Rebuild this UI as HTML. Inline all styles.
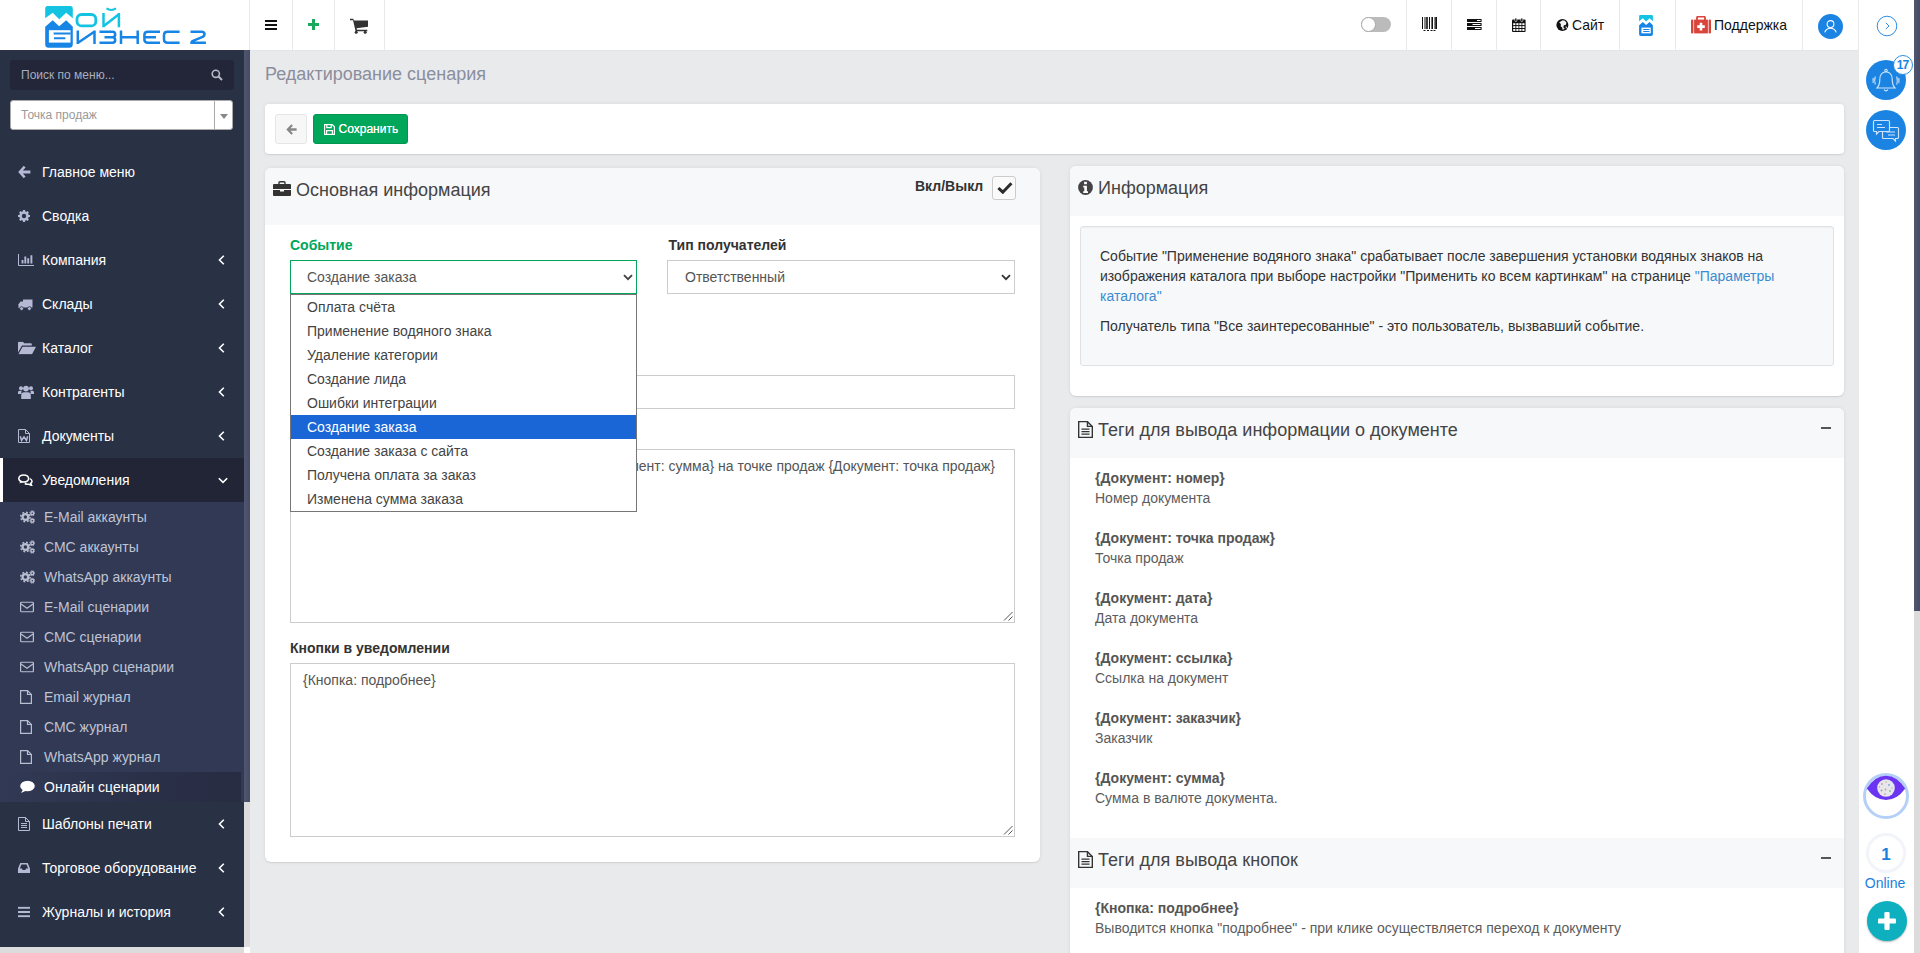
<!DOCTYPE html>
<html lang="ru"><head><meta charset="utf-8">
<style>
*{box-sizing:border-box;margin:0;padding:0}
html,body{width:1920px;height:953px;overflow:hidden;background:#e9eaec;font-family:"Liberation Sans",sans-serif;font-size:14px;color:#333}
.abs{position:absolute}
#hdr{position:absolute;left:0;top:0;width:1859px;height:51px;background:#fff;border-bottom:1px solid #e3e4e6}
.vd{position:absolute;top:0;width:1px;height:50px;background:#e9e9e9}
#side{position:absolute;left:0;top:50px;width:244px;height:897px;background:#293145;overflow:hidden}
#sidescroll{position:absolute;left:244px;top:50px;width:6px;height:897px;background:#dcdcdc}
#sidescroll i{position:absolute;left:0;top:0;width:6px;height:752px;background:linear-gradient(90deg,#51566f,#464c67)}
#sidebot{position:absolute;left:0;top:947px;width:244px;height:6px;background:#dcdcdc}
.mi{position:absolute;left:0;width:244px;height:44px;color:#fff;font-size:14px;line-height:44px;padding-left:42px}
.mi svg.ic{position:absolute;left:18px;top:50%;transform:translateY(-50%)}
.mi .ch{position:absolute;left:218px;top:17px}
.si{position:absolute;left:0;width:244px;height:30px;color:#bfc4d4;font-size:14px;line-height:30px;padding-left:44px}
.si svg{position:absolute;left:20px;top:50%;transform:translateY(-50%)}
#rp{position:absolute;left:1859px;top:0;width:55px;height:953px;background:#fff}
#pscroll{position:absolute;left:1914px;top:0;width:6px;height:953px;background:#dcdcdc}
#pscroll i{position:absolute;left:0;top:0;width:6px;height:611px;background:linear-gradient(90deg,#51566f,#464c67)}
.card{position:absolute;background:#fff;border-radius:6px;box-shadow:0 0 4px rgba(0,0,0,.07),0 1px 1px rgba(0,0,0,.08);overflow:hidden}
.ch1{position:absolute;left:0;top:0;width:100%;background:#f7f8fa}
.h3{position:absolute;font-size:18px;color:#444;white-space:nowrap}
.lbl{position:absolute;font-weight:bold;font-size:14px;color:#333;white-space:nowrap}
.fc{position:absolute;background:#fff;border:1px solid #ccc;font-size:14px;color:#555}
.tg{position:absolute;left:25px;white-space:nowrap;font-size:14px;line-height:20px;color:#5c5c5c}
.tg b{color:#555}
.op{position:absolute;left:0;width:345px;height:24px;line-height:24px;padding-left:16px;white-space:nowrap}
</style></head><body>
<!-- HEADER -->
<div id="hdr">
<svg class="abs" style="left:0;top:0" width="250" height="50" viewBox="0 0 250 50">
<path d="M45.2 8.6a2.5 2.5 0 0 1 2.5-2.5h22.6a2.5 2.5 0 0 1 2.5 2.5V18.3L66.2 12.7 59.2 19.2 52.7 12.7 45.2 18.3z" fill="#14c3e2"/>
<path d="M45.2 26.7L52.7 20.2 59.2 26.2 66.2 20.2 72.8 26.7V44.3a3.5 3.5 0 0 1-3.5 3.5H48.7a3.5 3.5 0 0 1-3.5-3.5z" fill="#1785e6"/>
<rect x="48.9" y="30.2" width="21.6" height="12.4" fill="#fff"/>
<path d="M53.6 33.4H70.5M54 38.3H65.3" stroke="#1785e6" stroke-width="2" fill="none"/>
<g fill="none" stroke="#14c3e2" stroke-width="2.5">
<rect x="77" y="14.5" width="18.8" height="11.4" rx="4.5" stroke-width="2.8"/>
<path d="M103.5 13.1V27.2M118.9 13.1V27.2M103.8 26L118.6 14.4" />
<path d="M106.5 8.4Q111.2 11.6 116 8.4" stroke-width="2"/>
</g>
<g fill="none" stroke="#1785e6" stroke-width="2.5">
<path d="M77.8 30.5V44M94.5 30.5V44M78 42.8L94.3 31.7"/>
<path d="M99.5 31.8H112.5Q115.2 31.8 115.2 34.5Q115.2 37.2 112.5 37.2H104.5M112.5 37.2Q115.2 37.2 115.2 40Q115.2 42.7 112.5 42.7H99.5"/>
<path d="M121 30.5V44M137.7 30.5V44M121 37.2H137.7"/>
<path d="M160 31.8H148Q144.4 31.8 144.4 35V39.5Q144.4 42.7 148 42.7H160M144.4 37.2H156"/>
<path d="M179.6 31.8H167.6Q164 31.8 164 35V39.5Q164 42.7 167.6 42.7H179.6"/>
<path d="M190.5 31.8H201.5Q204.5 31.8 204.5 34.2Q204.5 36.2 202 37.2L192.5 41.2Q191.5 41.7 191.5 42.7H205.9"/>
</g>
</svg>
<i class="vd" style="left:249px"></i><i class="vd" style="left:292px"></i><i class="vd" style="left:334px"></i><i class="vd" style="left:384px"></i>
<!-- hamburger -->
<svg class="abs" style="left:265px;top:20px" width="12" height="10"><path d="M0 1h12M0 5h12M0 9h12" stroke="#111" stroke-width="2"/></svg>
<!-- plus -->
<svg class="abs" style="left:308px;top:19px" width="11" height="11"><path d="M5.5 0v11M0 5.5h11" stroke="#1aa85c" stroke-width="3"/></svg>
<!-- cart -->
<svg class="abs" style="left:350px;top:18px" width="18" height="16" viewBox="0 0 18 16"><path d="M0 0.8h3.2l0.8 1.6h14v6.4l-11.4 1.4 0.4 1.6h10.3v1.4H5.6L3 2.2H0z" fill="#333"/><circle cx="6.2" cy="14.2" r="1.5" fill="#333"/><circle cx="15.2" cy="14.2" r="1.5" fill="#333"/></svg>
<!-- toggle -->
<div class="abs" style="left:1361px;top:17px;width:30px;height:15px;border-radius:8px;background:#bbb"></div>
<div class="abs" style="left:1361px;top:17px;width:15px;height:15px;border-radius:8px;background:#fff;border:1px solid #aaa"></div>
<i class="vd" style="left:1406px"></i><i class="vd" style="left:1451px"></i><i class="vd" style="left:1496px"></i><i class="vd" style="left:1540px"></i><i class="vd" style="left:1619px"></i><i class="vd" style="left:1675px"></i><i class="vd" style="left:1802px"></i><i class="vd" style="left:1858px"></i>
<!-- barcode -->
<svg class="abs" style="left:1422px;top:17px" width="15" height="15"><path d="M0.5 0v12M3 0v12M7.5 0v12M13 0v12" stroke="#111" stroke-width="1"/><path d="M5 0v12M10.2 0v12M14.2 0v12" stroke="#111" stroke-width="1.6"/><path d="M1.5 13.5h2M5 13.5h2M8.5 13.5h2M11.5 13.5h2" stroke="#111" stroke-width="1"/></svg>
<!-- tasks -->
<svg class="abs" style="left:1467px;top:19px" width="15" height="11"><path d="M0 1.5h14.6M0 5.5h14.6M0 9.5h14.6" stroke="#111" stroke-width="3"/><path d="M10 1.5h3.6M5.5 5.5h8M8 9.5h5.6" stroke="#fff" stroke-width="1"/></svg>
<!-- calendar -->
<svg class="abs" style="left:1512px;top:18px" width="14" height="14" viewBox="0 0 14 14"><rect x="0" y="1.6" width="13.6" height="12.4" rx="1" fill="#111"/><g fill="#fff"><rect x="1.2" y="5.2" width="2.2" height="1.9"/><rect x="4.3" y="5.2" width="2.2" height="1.9"/><rect x="7.3" y="5.2" width="2.2" height="1.9"/><rect x="10.3" y="5.2" width="2.2" height="1.9"/><rect x="1.2" y="8.1" width="2.2" height="1.9"/><rect x="4.3" y="8.1" width="2.2" height="1.9"/><rect x="7.3" y="8.1" width="2.2" height="1.9"/><rect x="10.3" y="8.1" width="2.2" height="1.9"/><rect x="1.2" y="11" width="2.2" height="1.9"/><rect x="4.3" y="11" width="2.2" height="1.9"/><rect x="7.3" y="11" width="2.2" height="1.9"/><rect x="10.3" y="11" width="2.2" height="1.9"/></g><rect x="2.8" y="0" width="2" height="3.6" rx="1" fill="#111" stroke="#fff" stroke-width=".6"/><rect x="8.8" y="0" width="2" height="3.6" rx="1" fill="#111" stroke="#fff" stroke-width=".6"/></svg>
<!-- globe + Сайт -->
<svg class="abs" style="left:1556px;top:19px" width="13" height="12" viewBox="0 0 13 12"><circle cx="6.4" cy="6" r="6" fill="#111"/><path d="M6.5 1.2l2.4.5 1.6 2-.8 2.2-1.8.4-.6 2 1.4 1.2-2 1.6-.4-2.4-1.6-1.4.2-2.2L3.200 3.400z" fill="#fff" opacity=".95"/><path d="M9.6 7.200l1.400.8-1 2z" fill="#fff"/></svg>
<div class="abs" style="left:1572px;top:17px;font-size:14px;line-height:16px;color:#111;transform-origin:0 50%;transform:scale(1,1.08)">Сайт</div>
<!-- small logo -->
<svg class="abs" style="left:1639px;top:15px" width="14" height="21" viewBox="45 6 28 42" preserveAspectRatio="none">
<path d="M45.2 8.600a2.500 2.500 0 0 1 2.500-2.500h22.600a2.500 2.500 0 0 1 2.500 2.500V18.300L66.200 12.700 59.200 19.200 52.700 12.700 45.200 18.300z" fill="#14c3e2"/>
<path d="M45.2 26.700L52.700 20.200 59.200 26.200 66.200 20.200 72.800 26.700V44.300a3.500 3.500 0 0 1-3.500 3.500H48.700a3.500 3.500 0 0 1-3.500-3.500z" fill="#1785e6"/>
<rect x="49.900" y="31.200" width="18.600" height="11.400" fill="#fff"/><path d="M53.500 35H66M53.500 39H66" stroke="#1785e6" stroke-width="2"/></svg>
<!-- medkit -->
<svg class="abs" style="left:1691px;top:16px" width="20" height="18" viewBox="0 0 20 18"><path d="M6 4V1.800Q6 .6 7.200 .6h5.600Q14 .6 14 1.800V4" fill="none" stroke="#d9453b" stroke-width="1.800"/><rect x="0" y="3.600" width="2.400" height="13.800" rx="1" fill="#d9453b"/><rect x="17.600" y="3.600" width="2.400" height="13.800" rx="1" fill="#d9453b"/><rect x="3.100" y="3.600" width="13.800" height="13.800" fill="#d9453b"/><path d="M10 6.800v7.600M6.200 10.600h7.600" stroke="#fff" stroke-width="2.600"/></svg>
<div class="abs" style="left:1714px;top:17px;font-size:14px;line-height:16px;color:#111;transform-origin:0 50%;transform:scale(1,1.08)">Поддержка</div>
<!-- user avatar -->
<div class="abs" style="left:1818px;top:14px;width:25px;height:25px;border-radius:13px;background:#1b84e3"></div>
<svg class="abs" style="left:1818px;top:14px" width="25" height="25" viewBox="0 0 25 25" fill="none" stroke="#fff" stroke-width="1.050"><circle cx="12.500" cy="10" r="3.400"/><path d="M6.800 18.400Q8 14.200 12.500 14.200T18.200 18.400"/></svg>
</div>
<!-- SIDEBAR -->
<div id="side">
<div class="abs" style="left:10px;top:10px;width:224px;height:30px;background:#222638;border-radius:3px;color:#a9adbd;font-size:12px;line-height:30px;padding-left:11px">Поиск по меню...</div>
<svg class="abs" style="left:211px;top:19px" width="12" height="12" viewBox="0 0 12 12"><circle cx="4.800" cy="4.800" r="3.600" fill="none" stroke="#b5b9c8" stroke-width="1.600"/><path d="M7.500 7.500L11 11" stroke="#b5b9c8" stroke-width="2"/></svg>
<div class="abs" style="left:10px;top:50px;width:223px;height:30px;background:#fff;border-radius:3px;border:1px solid #aaa;color:#999;font-size:12px;line-height:28px;padding-left:10px">Точка продаж</div>
<div class="abs" style="left:214px;top:51px;width:1px;height:28px;background:#aaa"></div><div class="abs" style="left:220px;top:64px;border:4px solid transparent;border-top:5px solid #888;border-bottom:0"></div>
<div class="abs" style="left:0;top:408px;width:244px;height:44px;background:#212536;border-left:3px solid #fff"></div>
<div class="abs" style="left:0;top:452px;width:244px;height:300px;background:#313954"></div>
<div class="abs" style="left:5px;top:722px;width:236px;height:30px;background:linear-gradient(90deg,#313954,#2a3048 60%,#272c42)"></div>
<div class="mi" style="top:100px;"><svg class="ic" width="13" height="13" viewBox="0 0 13 13"><path d="M.2 6.500L5.700 .2 7.600 2 4.900 5H12.400V8H4.900L7.600 11 5.700 12.800z" fill="#b5b9d4"/></svg>Главное меню</div>
<div class="mi" style="top:144px;"><svg class="ic" width="12" height="12" viewBox="0 0 12 12"><circle cx="6" cy="6" r="3.500" fill="none" stroke="#b5b9d4" stroke-width="2.600"/><g stroke="#b5b9d4" stroke-width="2.200"><path d="M6 0v2.200M6 9.800V12M0 6h2.200M9.800 6H12M1.800 1.800l1.500 1.500M8.700 8.700l1.500 1.500M1.800 10.200l1.500-1.500M8.700 3.300l1.500-1.500"/></g></svg>Сводка</div>
<div class="mi" style="top:188px;"><svg class="ic" width="16" height="12" viewBox="0 0 16 12"><path d="M0.500 0V11.500H16" fill="none" stroke="#b5b9d4" stroke-width="1"/><path d="M4.500 9.600V6M7.300 9.600V2.500M10.200 9.600V4.200M13.400 9.600V1.200" stroke="#b5b9d4" stroke-width="1.900"/></svg>Компания<svg class="ch" width="7" height="10" viewBox="0 0 7 10"><path d="M5.800 .8L1.500 5l4.300 4.200" fill="none" stroke="#fff" stroke-width="1.600"/></svg></div>
<div class="mi" style="top:232px;"><svg class="ic" style="margin-top:1px" width="15" height="12" viewBox="0 0 15 12"><path d="M5 .5h9.500v8H5z" fill="#b5b9d4"/><path d="M0.500 9V5.200L2.500 2.500H5V9z" fill="#b5b9d4"/><circle cx="3.600" cy="9.600" r="1.900" fill="#b5b9d4" stroke="#293145" stroke-width=".8"/><circle cx="11.400" cy="9.600" r="1.900" fill="#b5b9d4" stroke="#293145" stroke-width=".8"/></svg>Склады<svg class="ch" width="7" height="10" viewBox="0 0 7 10"><path d="M5.800 .8L1.500 5l4.300 4.200" fill="none" stroke="#fff" stroke-width="1.600"/></svg></div>
<div class="mi" style="top:276px;"><svg class="ic" width="18" height="13" viewBox="0 0 18 13"><path d="M0 11V1.200Q0 .3 1 .3h4l1.200 1.500h6.600q1 0 1 1V4H4L0 11z" fill="#b5b9d4"/><path d="M4.600 5.200H18L14 12.700H0.400z" fill="#b5b9d4"/></svg>Каталог<svg class="ch" width="7" height="10" viewBox="0 0 7 10"><path d="M5.800 .8L1.500 5l4.300 4.200" fill="none" stroke="#fff" stroke-width="1.600"/></svg></div>
<div class="mi" style="top:320px;"><svg class="ic" width="16" height="14" viewBox="0 0 16 14"><circle cx="3" cy="3.300" r="2" fill="#b5b9d4"/><circle cx="13" cy="3.300" r="2" fill="#b5b9d4"/><path d="M0 9V7.200q0-1.500 1.500-1.500h2.200Q3 7 3.500 9z" fill="#b5b9d4"/><path d="M16 9V7.200q0-1.500-1.500-1.500h-2.200Q13 7 12.500 9z" fill="#b5b9d4"/><circle cx="8" cy="3.600" r="2.900" fill="#b5b9d4"/><path d="M3.200 14V10q0-2.500 2.500-2.800h4.600Q12.800 7.500 12.800 10V14q-4.800 0-9.600 0z" fill="#b5b9d4"/></svg>Контрагенты<svg class="ch" width="7" height="10" viewBox="0 0 7 10"><path d="M5.800 .8L1.500 5l4.300 4.200" fill="none" stroke="#fff" stroke-width="1.600"/></svg></div>
<div class="mi" style="top:364px;"><svg class="ic" width="12" height="14" viewBox="0 0 12 14"><path d="M.5 .5H7.500L11.500 4.500V13.500H.5z" fill="none" stroke="#b5b9d4" stroke-width="1"/><path d="M7.500 .5V4.500H11.500" fill="none" stroke="#b5b9d4" stroke-width="1"/><path d="M2.300 7.200L3.600 11.400 6 7.800 8.400 11.400 9.700 7.200" fill="none" stroke="#b5b9d4" stroke-width="1.500"/></svg>Документы<svg class="ch" width="7" height="10" viewBox="0 0 7 10"><path d="M5.800 .8L1.500 5l4.300 4.200" fill="none" stroke="#fff" stroke-width="1.600"/></svg></div>
<div class="mi" style="top:408px;"><svg class="ic" width="15" height="12" viewBox="0 0 15 12"><ellipse cx="5.700" cy="4.500" rx="4.900" ry="3.500" fill="none" stroke="#fff" stroke-width="1.600"/><path d="M2.400 7.200L1.400 9.600l3.200-1.500z" fill="#fff"/><path d="M11.800 4.600Q14.200 5.600 14 7.500 13.700 8.800 12.600 9.400L13.600 11.400 10.800 10.200Q8.500 10.600 6.800 9.500" fill="none" stroke="#fff" stroke-width="1.500"/></svg>Уведомления<svg class="ch" style="top:19px" width="10" height="7" viewBox="0 0 10 7"><path d="M.8 1.200L5 5.400 9.200 1.200" fill="none" stroke="#fff" stroke-width="1.600"/></svg></div>
<div class="mi" style="top:752px;"><svg class="ic" width="12" height="14" viewBox="0 0 12 14"><path d="M.5 .5H7.500L11.500 4.500V13.500H.5z" fill="none" stroke="#b5b9d4" stroke-width="1"/><path d="M7.500 .5V4.500H11.500" fill="none" stroke="#b5b9d4" stroke-width="1"/><path d="M3 6.500h6M3 8.500h6M3 10.500h6" stroke="#b5b9d4" stroke-width="1"/></svg>Шаблоны печати<svg class="ch" width="7" height="10" viewBox="0 0 7 10"><path d="M5.800 .8L1.500 5l4.300 4.200" fill="none" stroke="#fff" stroke-width="1.600"/></svg></div>
<div class="mi" style="top:796px;"><svg class="ic" width="12" height="10" viewBox="0 0 13 10" preserveAspectRatio="none"><path d="M0 10V5.500L2.500 0H10.500L13 5.500V10z" fill="#b5b9d4"/><path d="M2 5.500L3.700 1.600H9.300L11 5.500H8.700L8 7H5L4.300 5.500z" fill="#293145"/></svg>Торговое оборудование<svg class="ch" width="7" height="10" viewBox="0 0 7 10"><path d="M5.800 .8L1.500 5l4.300 4.200" fill="none" stroke="#fff" stroke-width="1.600"/></svg></div>
<div class="mi" style="top:840px;"><svg class="ic" width="12" height="11" viewBox="0 0 13 11" preserveAspectRatio="none"><path d="M0 1.200h13M0 5.500h13M0 9.800h13" stroke="#b5b9d4" stroke-width="2"/></svg>Журналы и история<svg class="ch" width="7" height="10" viewBox="0 0 7 10"><path d="M5.800 .8L1.500 5l4.300 4.200" fill="none" stroke="#fff" stroke-width="1.600"/></svg></div>
<div class="si" style="top:452px"><svg width="15" height="14" viewBox="0 0 15 14"><circle cx="5.400" cy="7" r="2.900" fill="none" stroke="#b9bdd0" stroke-width="2.300"/><circle cx="5.400" cy="7" r="4.700" fill="none" stroke="#b9bdd0" stroke-width="1.500" stroke-dasharray="1.900 1.790"/><circle cx="12.300" cy="3.200" r="1.500" fill="none" stroke="#b9bdd0" stroke-width="1.400"/><circle cx="12.300" cy="3.200" r="2.500" fill="none" stroke="#b9bdd0" stroke-width="1" stroke-dasharray="1 .96"/><circle cx="12.300" cy="10.800" r="1.500" fill="none" stroke="#b9bdd0" stroke-width="1.400"/><circle cx="12.300" cy="10.800" r="2.500" fill="none" stroke="#b9bdd0" stroke-width="1" stroke-dasharray="1 .96"/></svg>E-Mail аккаунты</div>
<div class="si" style="top:482px"><svg width="15" height="14" viewBox="0 0 15 14"><circle cx="5.400" cy="7" r="2.900" fill="none" stroke="#b9bdd0" stroke-width="2.300"/><circle cx="5.400" cy="7" r="4.700" fill="none" stroke="#b9bdd0" stroke-width="1.500" stroke-dasharray="1.900 1.790"/><circle cx="12.300" cy="3.200" r="1.500" fill="none" stroke="#b9bdd0" stroke-width="1.400"/><circle cx="12.300" cy="3.200" r="2.500" fill="none" stroke="#b9bdd0" stroke-width="1" stroke-dasharray="1 .96"/><circle cx="12.300" cy="10.800" r="1.500" fill="none" stroke="#b9bdd0" stroke-width="1.400"/><circle cx="12.300" cy="10.800" r="2.500" fill="none" stroke="#b9bdd0" stroke-width="1" stroke-dasharray="1 .96"/></svg>СМС аккаунты</div>
<div class="si" style="top:512px"><svg width="15" height="14" viewBox="0 0 15 14"><circle cx="5.400" cy="7" r="2.900" fill="none" stroke="#b9bdd0" stroke-width="2.300"/><circle cx="5.400" cy="7" r="4.700" fill="none" stroke="#b9bdd0" stroke-width="1.500" stroke-dasharray="1.900 1.790"/><circle cx="12.300" cy="3.200" r="1.500" fill="none" stroke="#b9bdd0" stroke-width="1.400"/><circle cx="12.300" cy="3.200" r="2.500" fill="none" stroke="#b9bdd0" stroke-width="1" stroke-dasharray="1 .96"/><circle cx="12.300" cy="10.800" r="1.500" fill="none" stroke="#b9bdd0" stroke-width="1.400"/><circle cx="12.300" cy="10.800" r="2.500" fill="none" stroke="#b9bdd0" stroke-width="1" stroke-dasharray="1 .96"/></svg>WhatsApp аккаунты</div>
<div class="si" style="top:542px"><svg width="14" height="11" viewBox="0 0 14 11"><rect x=".6" y=".6" width="12.800" height="9.800" rx="1" fill="none" stroke="#b9bdd0" stroke-width="1.200"/><path d="M1 2.500L7 6.800 13 2.500" fill="none" stroke="#b9bdd0" stroke-width="1.200"/></svg>E-Mail сценарии</div>
<div class="si" style="top:572px"><svg width="14" height="11" viewBox="0 0 14 11"><rect x=".6" y=".6" width="12.800" height="9.800" rx="1" fill="none" stroke="#b9bdd0" stroke-width="1.200"/><path d="M1 2.500L7 6.800 13 2.500" fill="none" stroke="#b9bdd0" stroke-width="1.200"/></svg>СМС сценарии</div>
<div class="si" style="top:602px"><svg width="14" height="11" viewBox="0 0 14 11"><rect x=".6" y=".6" width="12.800" height="9.800" rx="1" fill="none" stroke="#b9bdd0" stroke-width="1.200"/><path d="M1 2.500L7 6.800 13 2.500" fill="none" stroke="#b9bdd0" stroke-width="1.200"/></svg>WhatsApp сценарии</div>
<div class="si" style="top:632px"><svg width="12" height="14" viewBox="0 0 12 14"><path d="M.6 .6H7.500L11.400 4.500V13.400H.6z" fill="none" stroke="#b9bdd0" stroke-width="1.200"/><path d="M7.500 .6V4.500H11.400" fill="none" stroke="#b9bdd0" stroke-width="1.200"/></svg>Email журнал</div>
<div class="si" style="top:662px"><svg width="12" height="14" viewBox="0 0 12 14"><path d="M.6 .6H7.500L11.400 4.500V13.400H.6z" fill="none" stroke="#b9bdd0" stroke-width="1.200"/><path d="M7.500 .6V4.500H11.400" fill="none" stroke="#b9bdd0" stroke-width="1.200"/></svg>СМС журнал</div>
<div class="si" style="top:692px"><svg width="12" height="14" viewBox="0 0 12 14"><path d="M.6 .6H7.500L11.400 4.500V13.400H.6z" fill="none" stroke="#b9bdd0" stroke-width="1.200"/><path d="M7.500 .6V4.500H11.400" fill="none" stroke="#b9bdd0" stroke-width="1.200"/></svg>WhatsApp журнал</div>
<div class="si" style="top:722px;color:#fff"><svg width="15" height="13" viewBox="0 0 15 13"><ellipse cx="7.500" cy="5.500" rx="7.300" ry="5.200" fill="#fff"/><path d="M3 9L1 12.600 6.500 10z" fill="#fff"/></svg>Онлайн сценарии</div>
</div>
<div id="sidescroll"><i></i></div>
<div id="sidebot"></div><div class="abs" style="left:244px;top:947px;width:6px;height:6px;background:#fff"></div>
<!-- MAIN -->
<div id="main">
<div class="abs" style="left:265px;top:64px;font-size:18px;line-height:20px;color:#8a8e9c;white-space:nowrap">Редактирование сценария</div>
<!-- toolbar -->
<div class="card" style="left:265px;top:104px;width:1579px;height:50px;border-radius:4px">
<div class="abs" style="left:10px;top:10px;width:32px;height:30px;border:1px solid #e6e6e6;background:#f7f7f7;border-radius:3px"></div>
<svg class="abs" style="left:21px;top:20px" width="11" height="11" viewBox="0 0 11 11"><path d="M5.400 .3L.3 5.500 5.400 10.700 6.900 9.200 4.500 6.700H10.600V4.300H4.500L6.900 1.800z" fill="#888"/></svg>
<div class="abs" style="left:48px;top:10px;width:95px;height:30px;background:#00a65a;border:1px solid #009551;border-radius:3px;color:#fff;font-size:12px;line-height:29px;padding-left:24.500px;text-shadow:0 0 .3px #fff">Сохранить</div>
<svg class="abs" style="left:59px;top:20px" width="11" height="11" viewBox="0 0 11 11"><path d="M.6 .6H8.200L10.400 2.800V10.400H.6z" fill="none" stroke="#fff" stroke-width="1.200"/><path d="M2.800 .6V3.600H7.200V.6M2.600 10.400V6.600H8.400V10.400" fill="none" stroke="#fff" stroke-width="1.200"/></svg>
</div>
<!-- LEFT CARD -->
<div class="card" style="left:265px;top:168px;width:775px;height:694px"><div class="abs" style="left:0;top:-2px;width:775px;height:696px">
<div class="ch1" style="height:59px"></div>
<svg class="abs" style="left:8px;top:15px" width="18" height="15" viewBox="0 0 18 15"><path d="M6 3V1.600Q6 .7 7 .7h4Q12 .7 12 1.600V3" fill="none" stroke="#333" stroke-width="1.400"/><path d="M0 4Q0 3 1 3H17Q18 3 18 4V8H0z" fill="#333"/><path d="M0 9H7V10.500H11V9H18V14Q18 15 17 15H1Q0 15 0 14z" fill="#333"/></svg>
<div class="h3" style="left:31px;top:13px;line-height:22px">Основная информация</div>
<div class="lbl" style="left:650px;top:12px;line-height:16px">Вкл/Выкл</div>
<div class="abs" style="left:727px;top:10px;width:24px;height:24px;border:1px solid #ccc;border-radius:3px;background:#fafafb"></div>
<svg class="abs" style="left:732px;top:15px" width="16" height="13" viewBox="0 0 16 13"><path d="M1.400 7L5.800 11.200 14.400 2.200" fill="none" stroke="#2b2b2b" stroke-width="3"/></svg>
<div class="lbl" style="left:25px;top:71px;line-height:16px;color:#00a65a">Событие</div>
<div class="fc" style="left:25px;top:94px;width:347px;height:34px;border-color:#00a65a;line-height:32px;padding-left:16px">Создание заказа</div>
<svg class="abs" style="left:358px;top:108px" width="10" height="7" viewBox="0 0 10 7"><path d="M1 1.200L5 5.200 9 1.200" fill="none" stroke="#444" stroke-width="1.900"/></svg>
<div class="lbl" style="left:403.600px;top:71px;line-height:16px">Тип получателей</div>
<div class="fc" style="left:402px;top:94px;width:348px;height:34px;line-height:32px;padding-left:17px">Ответственный</div>
<svg class="abs" style="left:736px;top:108px" width="10" height="7" viewBox="0 0 10 7"><path d="M1 1.200L5 5.200 9 1.200" fill="none" stroke="#333" stroke-width="1.800"/></svg>
<div class="fc" style="left:25px;top:209px;width:725px;height:34px"></div>
<div class="fc" style="left:25px;top:283px;width:725px;height:174px;line-height:20px;padding:6px 12px;white-space:nowrap;overflow:hidden"><span id="t1" style="margin-left:13.6px">Создан заказ {Документ: номер} на сумму {Документ: сумма} на точке продаж {Документ: точка продаж}</span></div>
<svg class="abs" style="left:738px;top:445px" width="10" height="10"><path d="M9.500 1L1 9.500M9.500 5.500L5.500 9.500" stroke="#555" stroke-width="1"/></svg>
<div class="lbl" style="left:25px;top:474px;line-height:16px">Кнопки в уведомлении</div>
<div class="fc" style="left:25px;top:497px;width:725px;height:174px;line-height:20px;padding:6px 12px">{Кнопка: подробнее}</div>
<svg class="abs" style="left:738px;top:659px" width="10" height="10"><path d="M9.500 1L1 9.500M9.500 5.500L5.500 9.500" stroke="#555" stroke-width="1"/></svg>
<!-- dropdown -->
<div class="abs" style="left:25px;top:128px;width:347px;height:218px;background:#fff;border:1px solid #767676;font-size:14px;color:#444">
<div class="op" style="top:0">Оплата счёта</div><div class="op" style="top:24px">Применение водяного знака</div><div class="op" style="top:48px">Удаление категории</div><div class="op" style="top:72px">Создание лида</div><div class="op" style="top:96px">Ошибки интеграции</div><div class="op" style="top:120px;background:#1a66d6;color:#fff">Создание заказа</div><div class="op" style="top:144px">Создание заказа с сайта</div><div class="op" style="top:168px">Получена оплата за заказ</div><div class="op" style="top:192px">Изменена сумма заказа</div>
</div>
</div></div>
<!-- RIGHT CARD 1 -->
<div class="card" style="left:1070px;top:166px;width:774px;height:230px">
<div class="ch1" style="height:50px"></div>
<svg class="abs" style="left:8px;top:14px" width="15" height="15" viewBox="0 0 15 15"><circle cx="7.500" cy="7.500" r="7.400" fill="#444"/><rect x="6.100" y="1.800" width="2.800" height="2.400" fill="#fff"/><path d="M5.200 5.800H8.900V11.200H10V13H5.200V11.200H6.300V7.500H5.200z" fill="#fff"/></svg>
<div class="h3" style="left:28px;top:11px;line-height:22px">Информация</div>
<div class="abs" style="left:10px;top:60px;width:754px;height:140px;background:#f7f8fa;border:1px solid #e1e2e4;border-radius:3px;box-shadow:inset 0 1px 1px rgba(0,0,0,.04);font-size:14px;line-height:20px;color:#333;padding:19px 19px">
<p style="margin-bottom:10px">Событие "Применение водяного знака" срабатывает после завершения установки водяных знаков на<br>изображения каталога при выборе настройки "Применить ко всем картинкам" на странице <span style="color:#3b8bd0">"Параметры<br>каталога"</span></p>
<p>Получатель типа "Все заинтересованные" - это пользователь, вызвавший событие.</p>
</div>
</div>
<!-- RIGHT CARD 2 -->
<div class="card" style="left:1070px;top:408px;width:774px;height:560px;border-radius:6px 6px 0 0"><div class="abs" style="left:0;top:-1px;width:774px;height:560px">
<div class="ch1" style="height:51px"></div>
<svg class="abs" style="left:8px;top:14px" width="15" height="17" viewBox="0 0 13 15" preserveAspectRatio="none"><path d="M.6 .6H8.200L12.400 4.800V14.400H.6z" fill="none" stroke="#333" stroke-width="1.200"/><path d="M8.200 .6V4.800H12.400" fill="none" stroke="#333" stroke-width="1.200"/><path d="M3 7.200h7M3 9.400h7M3 11.600h7" stroke="#333" stroke-width="1.100"/></svg>
<div class="h3" style="left:28px;top:12px;line-height:22px">Теги для вывода информации о документе</div>
<div class="abs" style="left:751px;top:20px;width:10px;height:2px;background:#555"></div>
<div class="tg" style="top:61px"><b>{Документ: номер}</b><br>Номер документа</div>
<div class="tg" style="top:121px"><b>{Документ: точка продаж}</b><br>Точка продаж</div>
<div class="tg" style="top:181px"><b>{Документ: дата}</b><br>Дата документа</div>
<div class="tg" style="top:241px"><b>{Документ: ссылка}</b><br>Ссылка на документ</div>
<div class="tg" style="top:301px"><b>{Документ: заказчик}</b><br>Заказчик</div>
<div class="tg" style="top:361px"><b>{Документ: сумма}</b><br>Сумма в валюте документа.</div>
<div class="ch1" style="top:431px;height:50px"></div>
<svg class="abs" style="left:8px;top:444px" width="15" height="17" viewBox="0 0 13 15" preserveAspectRatio="none"><path d="M.6 .6H8.200L12.400 4.800V14.400H.6z" fill="none" stroke="#333" stroke-width="1.200"/><path d="M8.200 .6V4.800H12.400" fill="none" stroke="#333" stroke-width="1.200"/><path d="M3 7.200h7M3 9.400h7M3 11.600h7" stroke="#333" stroke-width="1.100"/></svg>
<div class="h3" style="left:28px;top:442px;line-height:22px">Теги для вывода кнопок</div>
<div class="abs" style="left:751px;top:450px;width:10px;height:2px;background:#555"></div>
<div class="tg" style="top:491px"><b>{Кнопка: подробнее}</b><br>Выводится кнопка "подробнее" - при клике осуществляется переход к документу</div>
</div></div>
</div>
<!-- RIGHT PANEL -->
<div id="rp">
<svg class="abs" style="left:17px;top:15px" width="22" height="22" viewBox="0 0 22 22"><circle cx="11" cy="11" r="9.800" fill="#fff" stroke="#2f8de4" stroke-width="1"/><path d="M9.800 7.800L13 11 9.800 14.200" fill="none" stroke="#2f8de4" stroke-width="1"/></svg>
<div class="abs" style="left:7px;top:60px;width:40px;height:40px;border-radius:20px;background:#1b84e3"></div>
<svg class="abs" style="left:7px;top:60px" width="40" height="40" viewBox="0 0 40 40" fill="none" stroke="#cfe4fa" stroke-width="1.150"><path d="M11 28Q13.800 25 13.800 19.500Q13.800 12.500 20 11.800Q26.200 12.500 26.200 19.500Q26.200 25 29 28z"/><circle cx="20" cy="10.400" r="1.200"/><path d="M18 29.600Q20 32 22 29.600"/><path d="M9.300 16.500Q8 20.500 9.300 24.500M7.300 18Q6.700 20.500 7.300 23M30.700 16.500Q32 20.500 30.700 24.500M32.700 18Q33.300 20.500 32.700 23"/></svg>
<div class="abs" style="left:34px;top:55px;width:20px;height:20px;border-radius:10px;background:#fff;border:1px solid #2f8de4;color:#1b84e3;font-weight:bold;font-size:12px;line-height:18px;text-align:center;letter-spacing:-.8px;text-indent:-1px">17</div>
<div class="abs" style="left:7px;top:110px;width:40px;height:40px;border-radius:20px;background:#1b84e3"></div>
<svg class="abs" style="left:7px;top:110px" width="40" height="40" viewBox="0 0 40 40" fill="none" stroke="#cfe4fa" stroke-width="1.150"><path d="M8.500 10.500H22.500Q23.500 10.500 23.500 11.500V20.500Q23.500 21.500 22.500 21.500H13L10.500 24V21.500H8.500Q7.500 21.500 7.500 20.500V11.500Q7.500 10.500 8.500 10.500z"/><path d="M11 14.500H16M11 17.500H19"/><path d="M23.500 17.500H31.500Q32.500 17.500 32.500 18.500V27.500Q32.500 28.500 31.500 28.500H29.500V31L27 28.500H17.500Q16.500 28.500 16.500 27.500V21.500"/><path d="M20 22H29M22 25H29"/></svg>
<!-- eye -->
<div class="abs" style="left:4px;top:773px;width:46px;height:46px;border-radius:23px;background:#fff;border:3px solid #b5d0f8"></div>
<svg class="abs" style="left:5px;top:774px" width="44" height="44" viewBox="0 0 44 44"><path d="M2.800 14.500Q11 1.800 22 1.800Q33 1.800 41.200 14.500Q33 26 22 26Q11 26 2.800 14.500z" fill="#6b34f0"/><circle cx="22" cy="14" r="8.800" fill="#e6e6ec"/><g><circle cx="18" cy="10" r=".9" fill="#c99"/><circle cx="25" cy="11" r=".9" fill="#7ac"/><circle cx="21.500" cy="15.500" r=".9" fill="#d96"/><circle cx="26" cy="17" r=".9" fill="#8b8"/><circle cx="17.500" cy="16.500" r=".9" fill="#99c"/><circle cx="22" cy="8" r=".8" fill="#bb8"/><circle cx="21" cy="20" r=".8" fill="#c88"/><circle cx="15.500" cy="13" r=".7" fill="#aaa"/><circle cx="28" cy="14" r=".7" fill="#aaa"/></g></svg>
<div class="abs" style="left:7px;top:833px;width:40px;height:40px;border-radius:20px;background:#fff;border:3px solid #f3f4fa;color:#1b7fe0;font-size:17px;font-weight:bold;line-height:38px;text-align:center">1</div>
<div class="abs" style="left:0px;top:874px;width:52px;text-align:center;color:#1b7fe0;font-size:14px;line-height:18px">Online</div>
<div class="abs" style="left:8px;top:901px;width:40px;height:40px;border-radius:20px;background:#0eb0c0;box-shadow:0 1px 2px rgba(0,0,0,.3)"></div>
<svg class="abs" style="left:8px;top:901px" width="40" height="40"><rect x="17.400" y="11" width="5.200" height="18" rx="1.200" fill="#fff"/><rect x="11" y="17.400" width="18" height="5.200" rx="1.200" fill="#fff"/></svg>
</div>
<div id="pscroll"><i></i></div>
</body></html>
